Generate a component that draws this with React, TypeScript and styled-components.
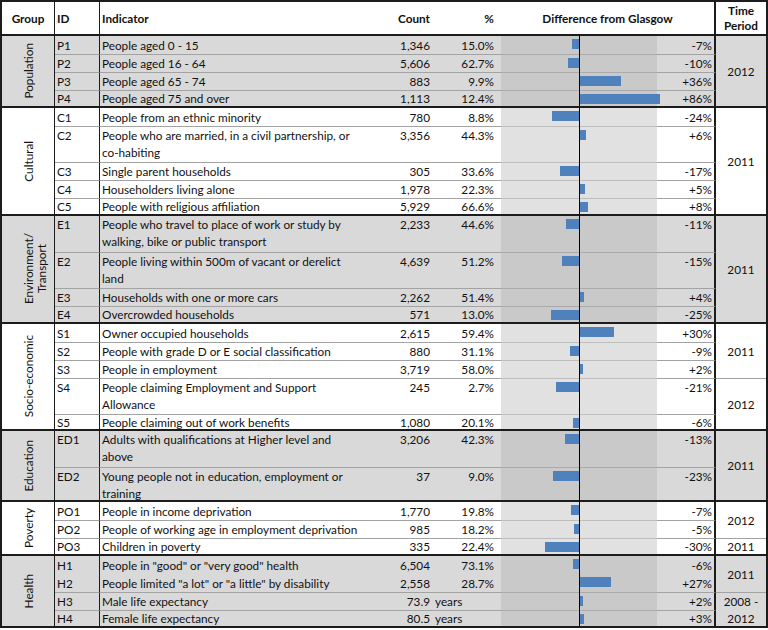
import React from 'react';
import styled, { createGlobalStyle, css } from 'styled-components';

const Global = createGlobalStyle`
  html, body { margin: 0; padding: 0; background: #fff; }
  body {
    font-family: Lato, "Liberation Sans", Arial, sans-serif;
    font-size: 11.75px;
    color: #111;
  }
`;

const COLS = '53px 45px 267px 65px 69px 156px 59px 50px';
const DARK = '#1c1c1c';

type Row = {
  id: string;
  ind: string[];
  count: string;
  pct: string;
  diff: string;
  bar: number;
  h: number;
  noSep?: boolean;
};

type TimeSpan = { label: string[]; span: number };

type Group = {
  name: string[];
  shaded: boolean;
  pad?: number;
  rows: Row[];
  times: TimeSpan[];
};

const r = (
  id: string,
  ind: string | string[],
  count: string,
  pct: string,
  diff: string,
  bar: number,
  h = 18,
  noSep = false
): Row => ({ id, ind: Array.isArray(ind) ? ind : [ind], count, pct, diff, bar, h, noSep });

const groups: Group[] = [
  {
    name: ['Population'],
    shaded: true,
    rows: [
      r('P1', 'People aged 0 - 15', '1,346', '15.0%', '-7%', -7),
      r('P2', 'People aged 16 - 64', '5,606', '62.7%', '-10%', -11),
      r('P3', 'People aged 65 - 74', '883', '9.9%', '+36%', 41),
      r('P4', 'People aged 75 and over', '1,113', '12.4%', '+86%', 80, 16),
    ],
    times: [{ label: ['2012'], span: 4 }],
  },
  {
    name: ['Cultural'],
    shaded: false,
    rows: [
      r('C1', 'People from an ethnic minority', '780', '8.8%', '-24%', -27),
      r('C2', ['People who are married, in a civil partnership, or', 'co-habiting'], '3,356', '44.3%', '+6%', 6, 36),
      r('C3', 'Single parent households', '305', '33.6%', '-17%', -19),
      r('C4', 'Householders living alone', '1,978', '22.3%', '+5%', 5),
      r('C5', 'People with religious affiliation', '5,929', '66.6%', '+8%', 8, 16),
    ],
    times: [{ label: ['2011'], span: 5 }],
  },
  {
    name: ['Environment/', 'Transport'],
    shaded: true,
    pad: 14,
    rows: [
      r('E1', ['People who travel to place of work or study by', 'walking, bike or public transport'], '2,233', '44.6%', '-11%', -13, 36),
      r('E2', ['People living within 500m of vacant or derelict', 'land'], '4,639', '51.2%', '-15%', -17, 36),
      r('E3', 'Households with one or more cars', '2,262', '51.4%', '+4%', 4),
      r('E4', 'Overcrowded households', '571', '13.0%', '-25%', -28, 16),
    ],
    times: [{ label: ['2011'], span: 4 }],
  },
  {
    name: ['Socio-economic'],
    shaded: false,
    rows: [
      r('S1', 'Owner occupied households', '2,615', '59.4%', '+30%', 34),
      r('S2', 'People with grade D or E social classification', '880', '31.1%', '-9%', -9),
      r('S3', 'People in employment', '3,719', '58.0%', '+2%', 3),
      r('S4', ['People claiming Employment and Support', 'Allowance'], '245', '2.7%', '-21%', -23, 36),
      r('S5', 'People claiming out of work benefits', '1,080', '20.1%', '-6%', -6, 15),
    ],
    times: [
      { label: ['2011'], span: 3 },
      { label: ['2012'], span: 2 },
    ],
  },
  {
    name: ['Education'],
    shaded: true,
    rows: [
      r('ED1', ['Adults with qualifications at Higher level and', 'above'], '3,206', '42.3%', '-13%', -14, 36),
      r('ED2', ['Young people not in education, employment or', 'training'], '37', '9.0%', '-23%', -26, 33),
    ],
    times: [{ label: ['2011'], span: 2 }],
  },
  {
    name: ['Poverty'],
    shaded: false,
    rows: [
      r('PO1', 'People in income deprivation', '1,770', '19.8%', '-7%', -8),
      r('PO2', 'People of working age in employment deprivation', '985', '18.2%', '-5%', -5),
      r('PO3', 'Children in poverty', '335', '22.4%', '-30%', -34, 16),
    ],
    times: [
      { label: ['2012'], span: 2 },
      { label: ['2011'], span: 1 },
    ],
  },
  {
    name: ['Health'],
    shaded: true,
    rows: [
      r('H1', 'People in "good" or "very good" health', '6,504', '73.1%', '-6%', -6),
      r('H2', 'People limited "a lot" or "a little" by disability', '2,558', '28.7%', '+27%', 31, 18, true),
      r('H3', 'Male life expectancy', '73.9', 'years', '+2%', 3),
      r('H4', 'Female life expectancy', '80.5', 'years', '+3%', 4, 16),
    ],
    times: [
      { label: ['2011'], span: 2 },
      { label: ['2008 -', '2012'], span: 2 },
    ],
  },
];

/* ---------- layout ---------- */

const Table = styled.div`
  width: 768px;
  box-sizing: border-box;
  border: 2px solid ${DARK};
  display: flex;
  flex-direction: column;
`;

const HeaderRow = styled.div`
  display: grid;
  grid-template-columns: ${COLS};
  height: 34px;
  box-sizing: border-box;
  border-bottom: 2px solid ${DARK};
  font-weight: 700;
  background: #fff;
`;

const HeadCell = styled.div<{
  $align: 'flex-start' | 'flex-end' | 'center';
  $line?: number;
  $span?: number;
  $pl?: number;
  $pr?: number;
}>`
  display: flex;
  align-items: center;
  justify-content: ${(p) => p.$align};
  text-align: center;
  line-height: 15px;
  box-sizing: border-box;
  white-space: nowrap;
  padding-left: ${(p) => p.$pl ?? 0}px;
  padding-right: ${(p) => p.$pr ?? 0}px;
  grid-column: span ${(p) => p.$span ?? 1};
  border-right: ${(p) => (p.$line ? `${p.$line}px solid ${DARK}` : 'none')};
`;

const GroupGrid = styled.div<{ $shaded: boolean; $rows: string; $last: boolean }>`
  display: grid;
  grid-template-columns: ${COLS};
  grid-template-rows: ${(p) => p.$rows};
  background: ${(p) => (p.$shaded ? '#d9d9d9' : '#ffffff')};
  border-bottom: ${(p) => (p.$last ? 'none' : `2px solid ${DARK}`)};
`;

const GroupCell = styled.div<{ $pad: number }>`
  grid-column: 1;
  grid-row: 1 / -1;
  border-right: 1px solid ${DARK};
  display: flex;
  align-items: center;
  justify-content: center;
  padding-left: ${(p) => p.$pad}px;
`;

const GroupLabel = styled.span`
  writing-mode: vertical-rl;
  transform: rotate(180deg);
  text-align: center;
  line-height: 13px;
  white-space: nowrap;
`;

const cellBase = css<{ $row: number; $sep: boolean; $tall: boolean }>`
  grid-row: ${(p) => p.$row};
  box-sizing: border-box;
  display: flex;
  align-items: ${(p) => (p.$tall ? 'flex-start' : 'center')};
  border-top: ${(p) => (p.$sep ? '1px solid #a3a3a3' : 'none')};
  line-height: 17px;
  white-space: nowrap;
  min-height: 0;
`;

type CellProps = { $row: number; $sep: boolean; $tall: boolean };

const IdCell = styled.div<CellProps>`
  ${cellBase};
  grid-column: 2;
  padding-left: 2px;
  border-right: 1px solid ${DARK};
`;

const IndicatorCell = styled.div<CellProps>`
  ${cellBase};
  grid-column: 3;
  padding-left: 2px;
`;

const CountCell = styled.div<CellProps>`
  ${cellBase};
  grid-column: 4;
  justify-content: flex-end;
  padding-right: 2px;
`;

const PctCell = styled.div<CellProps & { $unit: boolean }>`
  ${cellBase};
  grid-column: 5;
  justify-content: ${(p) => (p.$unit ? 'flex-start' : 'flex-end')};
  padding-right: 7px;
  padding-left: 3px;
`;

const ChartCell = styled.div<{ $row: number; $sep: boolean; $shaded: boolean }>`
  grid-column: 6;
  grid-row: ${(p) => p.$row};
  position: relative;
  box-sizing: border-box;
  background: ${(p) => (p.$shaded ? '#c9c9c9' : '#e1e1e1')};
  border-top: ${(p) => (p.$sep ? `1px solid ${p.$shaded ? '#ababab' : '#bdbdbd'}` : 'none')};
  &::before {
    content: '';
    position: absolute;
    left: 78px;
    top: -1px;
    bottom: 0;
    width: 1px;
    background: #000;
  }
`;

const Bar = styled.div`
  position: absolute;
  top: 3px;
  height: 10px;
  background: #4f81bd;
`;

const DiffCell = styled.div<CellProps>`
  ${cellBase};
  grid-column: 7;
  justify-content: flex-end;
  padding-right: 2px;
  border-right: 2px solid ${DARK};
`;

const TimeCell = styled.div<{ $start: number; $span: number; $sep: boolean }>`
  grid-column: 8;
  grid-row: ${(p) => p.$start} / span ${(p) => p.$span};
  box-sizing: border-box;
  display: flex;
  align-items: center;
  justify-content: center;
  text-align: center;
  line-height: 17px;
  border-top: ${(p) => (p.$sep ? '1px solid #a3a3a3' : 'none')};
`;

const Lines = ({ lines }: { lines: string[] }) => (
  <span>
    {lines.map((l, i) => (
      <React.Fragment key={i}>
        {i > 0 && <br />}
        {l}
      </React.Fragment>
    ))}
  </span>
);

const GroupBlock = ({ g, last }: { g: Group; last: boolean }) => {
  const heights = g.rows.map((row) => `${row.h}px`).join(' ');
  let start = 1;
  const timeCells = g.times.map((t, i) => {
    const cell = (
      <TimeCell key={`t${i}`} $start={start} $span={t.span} $sep={i > 0}>
        <Lines lines={t.label} />
      </TimeCell>
    );
    start += t.span;
    return cell;
  });
  return (
    <GroupGrid $shaded={g.shaded} $rows={heights} $last={last}>
      <GroupCell $pad={g.pad ?? 0}>
        <GroupLabel>
          <Lines lines={g.name} />
        </GroupLabel>
      </GroupCell>
      {g.rows.map((row, i) => {
        const rowNo = i + 1;
        const sep = i > 0 && !row.noSep;
        const tall = row.ind.length > 1;
        const p = { $row: rowNo, $sep: sep, $tall: tall };
        const w = Math.abs(row.bar);
        return (
          <React.Fragment key={row.id}>
            <IdCell {...p}>{row.id}</IdCell>
            <IndicatorCell {...p}>
              <Lines lines={row.ind} />
            </IndicatorCell>
            <CountCell {...p}>{row.count}</CountCell>
            <PctCell {...p} $unit={row.pct === 'years'}>
              {row.pct}
            </PctCell>
            <ChartCell $row={rowNo} $sep={sep} $shaded={g.shaded}>
              <Bar style={{ left: row.bar >= 0 ? 79 : 78 - w, width: w }} />
            </ChartCell>
            <DiffCell {...p}>{row.diff}</DiffCell>
          </React.Fragment>
        );
      })}
      {timeCells}
    </GroupGrid>
  );
};

export default function App() {
  return (
    <>
      <Global />
      <Table>
        <HeaderRow>
          <HeadCell $align="center" $line={1}>
            Group
          </HeadCell>
          <HeadCell $align="flex-start" $line={1} $pl={2}>
            ID
          </HeadCell>
          <HeadCell $align="flex-start" $pl={2}>
            Indicator
          </HeadCell>
          <HeadCell $align="flex-end" $pr={2}>
            Count
          </HeadCell>
          <HeadCell $align="flex-end" $pr={7}>
            %
          </HeadCell>
          <HeadCell $align="center" $span={2} $line={2}>
            Difference from Glasgow
          </HeadCell>
          <HeadCell $align="center">
            <Lines lines={['Time', 'Period']} />
          </HeadCell>
        </HeaderRow>
        {groups.map((g, i) => (
          <GroupBlock key={g.name.join('')} g={g} last={i === groups.length - 1} />
        ))}
      </Table>
    </>
  );
}
